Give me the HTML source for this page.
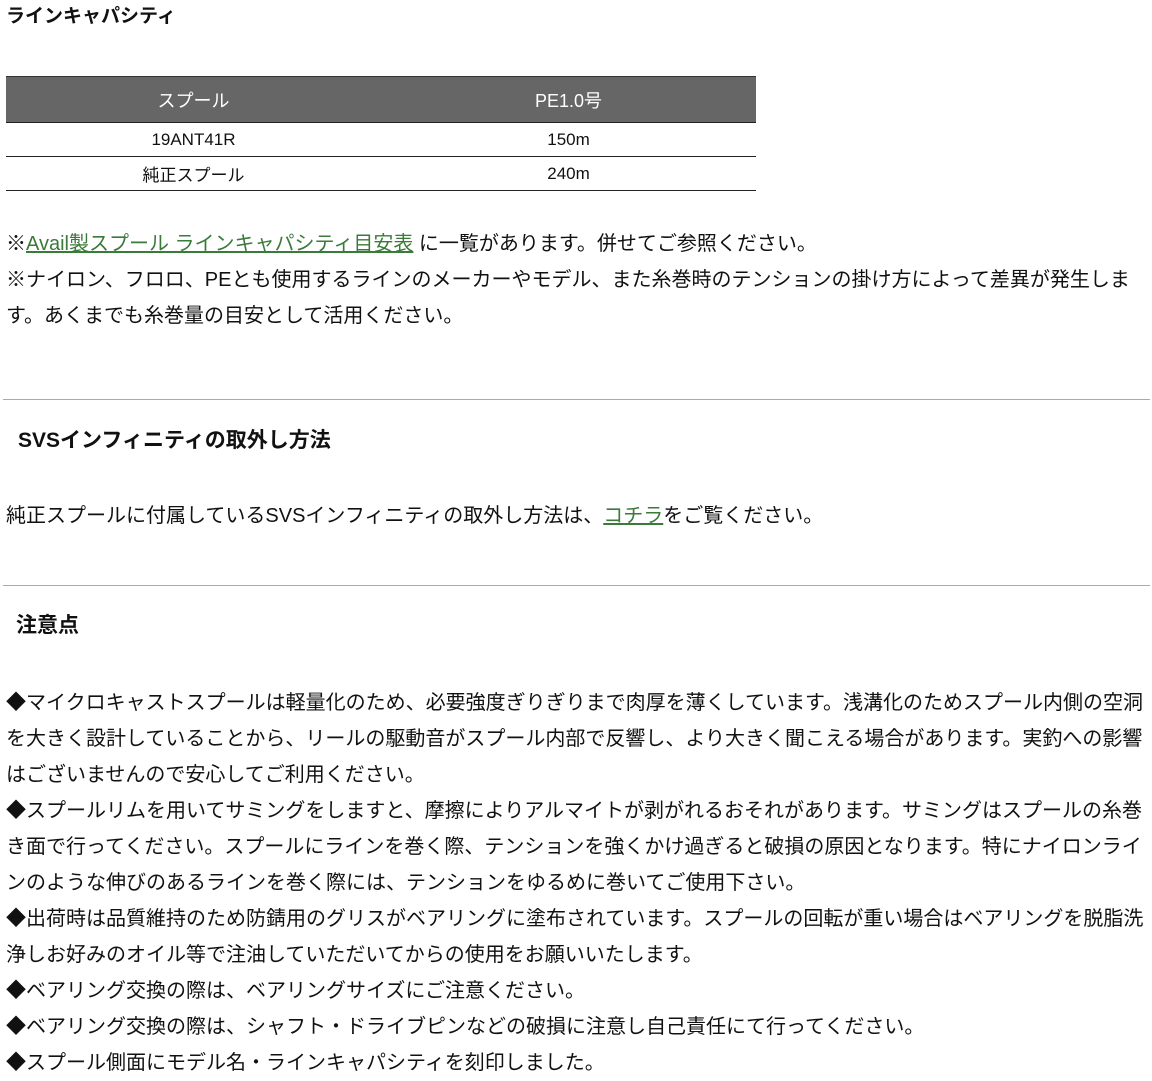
<!DOCTYPE html>
<html><head><meta charset="utf-8"><style>
body{margin:0;width:1152px;height:1076px;background:#fff;position:relative;overflow:hidden;font-family:"Liberation Sans","Noto Sans CJK JP",sans-serif;color:#111;}
.a{position:absolute;white-space:nowrap;}
.t{font-size:20px;line-height:36px;left:6px;}
.h{font-weight:bold;font-size:21px;}
a{color:#3a7a3a;text-decoration:underline;}
table{position:absolute;left:6px;top:76px;width:750px;border-collapse:collapse;font-size:17px;}
th,td{padding:0;}
th{background:#666;color:#fff;font-weight:normal;font-size:18px;height:45px;border-top:1px solid #333;border-bottom:1px solid #222;}
td{text-align:center;height:33px;border-bottom:1px solid #222;}
hr{position:absolute;left:3px;width:1147px;border:0;border-top:1px solid #aaa;margin:0;}
</style></head><body>
<div class="a h" style="left:6px;top:1px;font-size:19px;">ラインキャパシティ</div>
<table><tr><th style="width:375px">スプール</th><th>PE1.0号</th></tr>
<tr><td>19ANT41R</td><td>150m</td></tr>
<tr><td>純正スプール</td><td>240m</td></tr></table>
<div class="a t" style="top:226px;">※<a>Avail製スプール ラインキャパシティ目安表</a> に一覧があります。併せてご参照ください。</div>
<div class="a t" style="top:262px;">※ナイロン、フロロ、PEとも使用するラインのメーカーやモデル、また糸巻時のテンションの掛け方によって差異が発生しま</div>
<div class="a t" style="top:298px;">す。あくまでも糸巻量の目安として活用ください。</div>
<hr style="top:399px">
<div class="a h" style="left:18px;top:424px;">SVSインフィニティの取外し方法</div>
<div class="a t" style="top:498px;">純正スプールに付属しているSVSインフィニティの取外し方法は、<a>コチラ</a>をご覧ください。</div>
<hr style="top:585px">
<div class="a h" style="left:16px;top:609px;">注意点</div>
<div class="a t" style="top:685px;">◆マイクロキャストスプールは軽量化のため、必要強度ぎりぎりまで肉厚を薄くしています。浅溝化のためスプール内側の空洞</div>
<div class="a t" style="top:721px;">を大きく設計していることから、リールの駆動音がスプール内部で反響し、より大きく聞こえる場合があります。実釣への影響</div>
<div class="a t" style="top:757px;">はございませんので安心してご利用ください。</div>
<div class="a t" style="top:793px;">◆スプールリムを用いてサミングをしますと、摩擦によりアルマイトが剥がれるおそれがあります。サミングはスプールの糸巻</div>
<div class="a t" style="top:829px;">き面で行ってください。スプールにラインを巻く際、テンションを強くかけ過ぎると破損の原因となります。特にナイロンライ</div>
<div class="a t" style="top:865px;">ンのような伸びのあるラインを巻く際には、テンションをゆるめに巻いてご使用下さい。</div>
<div class="a t" style="top:901px;">◆出荷時は品質維持のため防錆用のグリスがベアリングに塗布されています。スプールの回転が重い場合はベアリングを脱脂洗</div>
<div class="a t" style="top:937px;">浄しお好みのオイル等で注油していただいてからの使用をお願いいたします。</div>
<div class="a t" style="top:973px;">◆ベアリング交換の際は、ベアリングサイズにご注意ください。</div>
<div class="a t" style="top:1009px;">◆ベアリング交換の際は、シャフト・ドライブピンなどの破損に注意し自己責任にて行ってください。</div>
<div class="a t" style="top:1045px;">◆スプール側面にモデル名・ラインキャパシティを刻印しました。</div>
</body></html>
